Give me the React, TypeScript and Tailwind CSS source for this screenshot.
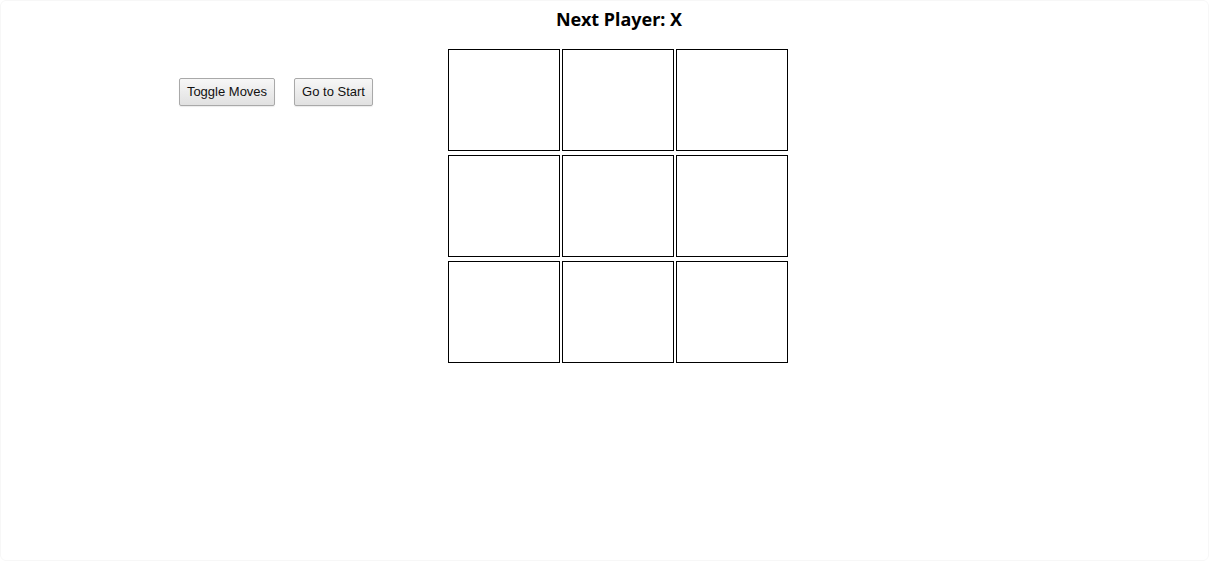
import React from "react";

export default function App() {
  const cells = Array.from({ length: 9 });
  const btn =
    "h-[28px] pb-[1px] border border-[#a9a9a9] rounded-[2px] bg-gradient-to-b from-[#f7f7f7] to-[#e1e1e1] text-[13px] text-[#111] leading-none font-['Liberation_Sans',Arial,sans-serif] shadow-[0_1px_1px_rgba(0,0,0,0.08)]";
  return (
    <div className="w-[1209px] h-[561px] bg-white flex border border-[#f7f7f7] rounded-[6px] overflow-hidden box-border">
      <div className="w-[447px] shrink-0 pl-[178px] pt-[77px] flex items-start gap-[19px]">
        <button className={`${btn} w-[96px]`}>Toggle Moves</button>
        <button className={`${btn} w-[79px]`}>Go to Start</button>
      </div>
      <div className="w-[340px] flex flex-col items-center">
        <div className="h-[48px] pt-[6px] text-[18px] font-bold text-black leading-[24px] font-['Noto_Sans','Open_Sans',sans-serif] translate-x-[1px]">
          Next Player: X
        </div>
        <div className="grid grid-cols-[112px_112px_112px] grid-rows-[102px_102px_102px] gap-x-[2px] gap-y-[4px]">
          {cells.map((_, i) => (
            <div key={i} className="border border-black bg-white" />
          ))}
        </div>
      </div>
    </div>
  );
}
